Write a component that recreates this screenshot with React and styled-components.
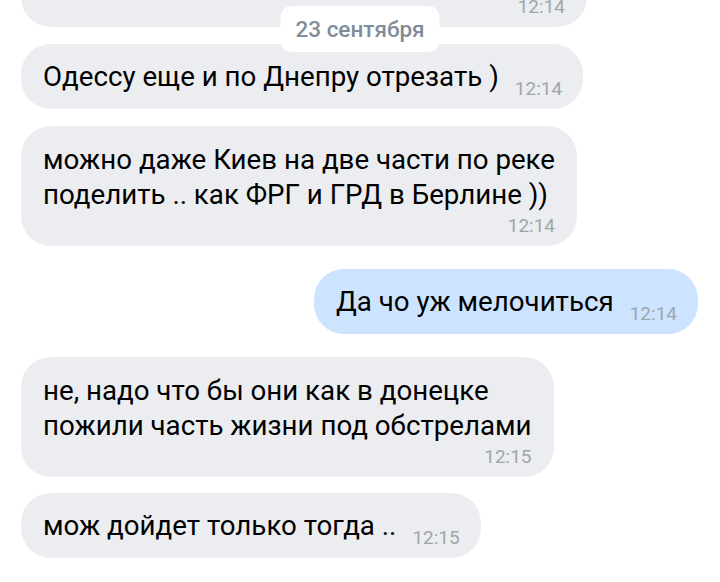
import styled, { createGlobalStyle } from "styled-components";

const GlobalStyle = createGlobalStyle`
  html, body {
    margin: 0;
    padding: 0;
    background: #ffffff;
    font-family: Roboto, "Noto Sans", sans-serif;
    -webkit-font-smoothing: antialiased;
  }
`;

const messages = [
  { id: 0, lines: [""], time: "12:14", multi: true, width: 566, gap: 0 },
  { id: 1, lines: ["Одессу еще и по Днепру отрезать )"], time: "12:14", gap: 17 },
  {
    id: 2,
    lines: ["можно даже Киев на две части по реке", "поделить .. как ФРГ и ГРД в Берлине ))"],
    time: "12:14",
    multi: true,
    gap: 17,
  },
  { id: 3, lines: ["Да чо уж мелочиться"], time: "12:14", out: true, gap: 23 },
  {
    id: 4,
    lines: ["не, надо что бы они как в донецке", "пожили часть жизни под обстрелами"],
    time: "12:15",
    multi: true,
    gap: 23,
  },
  { id: 5, lines: ["мож дойдет только тогда .."], time: "12:15", gap: 16 },
];

export default function App() {
  return (
    <>
      <GlobalStyle />
      <Screen>
        <Chat>
          {messages.map((m) => (
            <Bubble
              key={m.id}
              $out={m.out}
              $multi={m.multi}
              $gap={m.gap}
              $width={m.width}
            >
              {m.multi ? (
                <>
                  {m.lines.map((l, i) => (
                    <Line key={i}>{l}</Line>
                  ))}
                  <TimeRow>{m.time}</TimeRow>
                </>
              ) : (
                <Line>
                  {m.lines[0]}
                  <InlineTime>{m.time}</InlineTime>
                </Line>
              )}
            </Bubble>
          ))}
        </Chat>
        <DatePill>23 сентября</DatePill>
      </Screen>
    </>
  );
}

const Screen = styled.div`
  position: relative;
  width: 720px;
  height: 582px;
  overflow: hidden;
  background: #fff;
`;

const Chat = styled.div`
  display: flex;
  flex-direction: column;
  align-items: flex-start;
  margin-top: -58px;
  padding: 0 22px 0 21px;
`;

const Bubble = styled.div`
  box-sizing: border-box;
  align-self: ${(p) => (p.$out ? "flex-end" : "flex-start")};
  margin-top: ${(p) => p.$gap}px;
  min-width: ${(p) => (p.$width ? `${p.$width}px` : "0")};
  padding: ${(p) => (p.$multi ? "16px 22px 10px" : "15px 21px 15px 22px")};
  background: ${(p) => (p.$out ? "#cce4ff" : "#ebedf0")};
  border-radius: 30px;
  color: #000;
`;

const Line = styled.div`
  font-size: 27.7px;
  line-height: 35px;
  white-space: nowrap;
  min-height: 35px;
`;

const InlineTime = styled.span`
  margin-left: 16px;
  font-size: 19px;
  line-height: 0;
  color: #a0a5ab;
  vertical-align: -9px;
`;

const TimeRow = styled.div`
  margin-top: 4px;
  text-align: right;
  font-size: 19px;
  line-height: 20px;
  color: #a0a5ab;
`;

const DatePill = styled.div`
  position: absolute;
  top: 6px;
  left: 50%;
  transform: translateX(-50%);
  height: 46px;
  padding: 0 15px;
  display: flex;
  align-items: center;
  background: #fff;
  border-radius: 11px;
  font-size: 22.5px;
  font-weight: 500;
  color: #818c99;
  white-space: nowrap;
`;
